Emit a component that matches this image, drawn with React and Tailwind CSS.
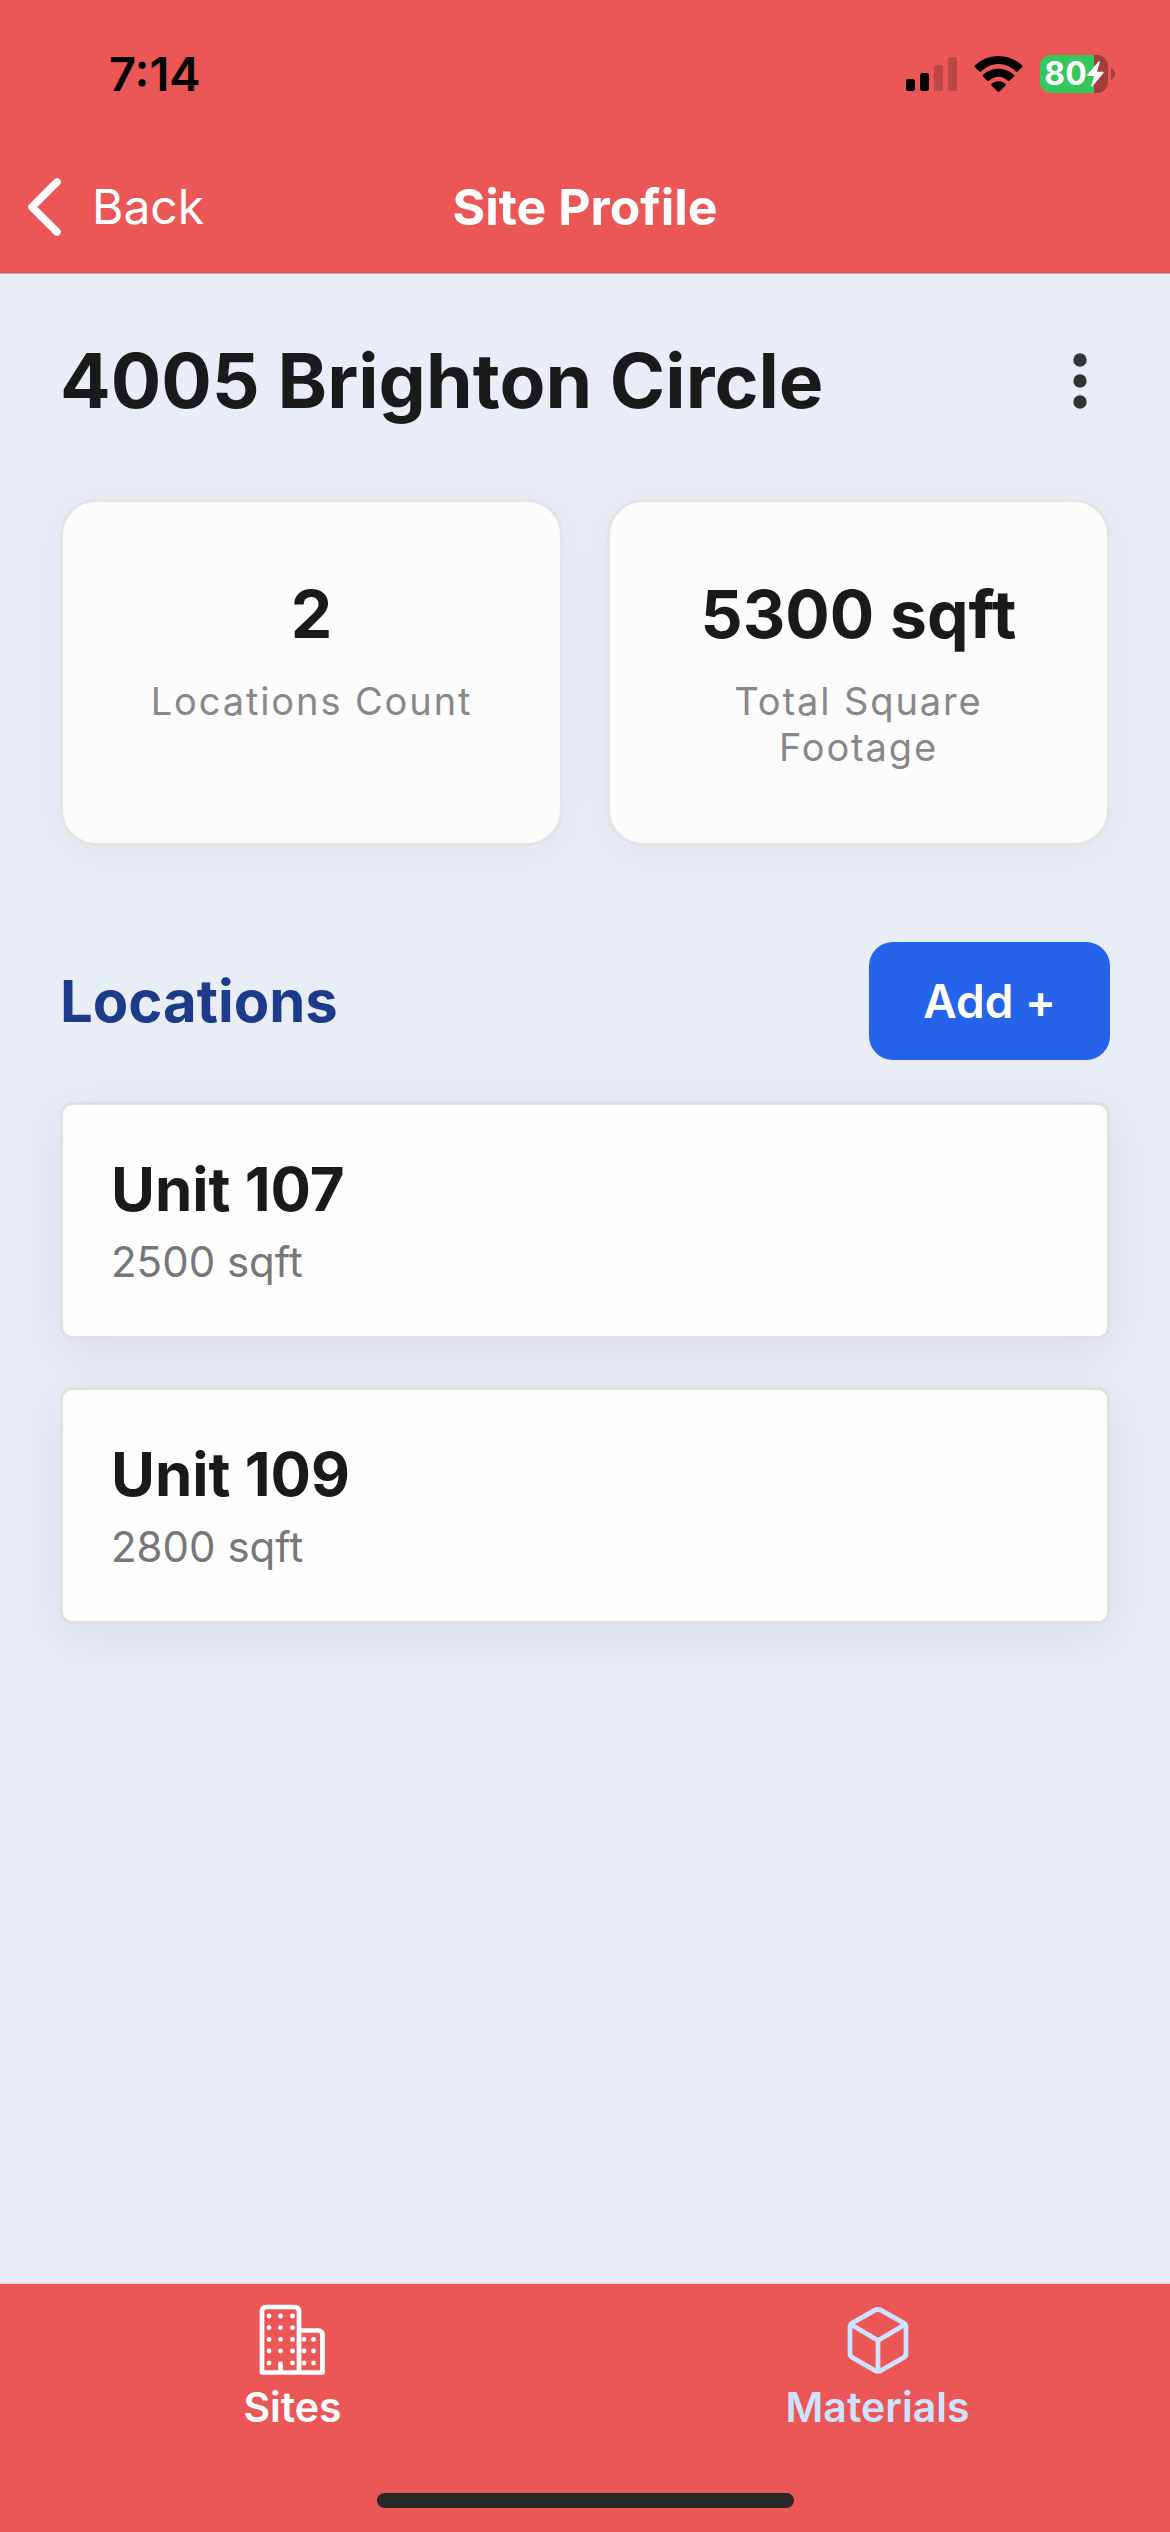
const stats = [
  { value: "2", label: "Locations Count" },
  { value: "5300 sqft", label: "Total Square Footage" },
];

const locations = [
  { name: "Unit 107", size: "2500 sqft" },
  { name: "Unit 109", size: "2800 sqft" },
];

function SignalIcon() {
  return (
    <svg className="h-[36px] w-[51px]" viewBox="0 0 51 36" aria-hidden="true">
      <rect x="0" y="23" width="9" height="12" rx="2.5" />
      <rect x="14" y="17" width="9" height="18" rx="2.5" />
      <rect x="28" y="9" width="9" height="26" rx="2.5" fillOpacity="0.2" />
      <rect x="42" y="1" width="9" height="34" rx="2.5" fillOpacity="0.2" />
    </svg>
  );
}

function WifiIcon() {
  return (
    <svg className="h-[36px] w-[49px]" viewBox="0 0 49 36" aria-hidden="true">
      <path d="M24.5 0C33.7 0 42 3.600 48.200 9.500C48.700 10 48.700 10.600 48.200 11.100L43.700 15.500C43.200 16 42.500 16 42 15.500C37.400 11 31.200 8 24.500 8S11.600 11 7 15.500C6.500 16 5.800 16 5.300 15.500L.8 11.100C.3 10.600 .3 10 .8 9.500C7 3.600 15.300 0 24.500 0Z" />
      <path d="M24.500 12.700C30.500 12.700 36 15 40 18.900C40.500 19.400 40.500 20 40 20.500L35.600 24.700C35.100 25.200 34.500 25.200 34 24.700C31.500 22.400 28.200 20.700 24.500 20.700S17.500 22.400 15 24.700C14.500 25.200 13.900 25.200 13.400 24.700L9 20.500C8.500 20 8.500 19.400 9 18.900C13 15 18.500 12.700 24.500 12.700Z" />
      <path d="M24.500 25.300C27.200 25.300 29.700 26.300 31.500 28C32 28.500 32 29.100 31.500 29.600L25.500 35.400C24.900 36 24.100 36 23.500 35.400L17.500 29.600C17 29.100 17 28.500 17.500 28C19.300 26.300 21.800 25.300 24.500 25.300Z" />
    </svg>
  );
}

function BatteryIcon() {
  return (
    <div className="flex items-center" role="img" aria-label="Battery 80 percent, charging">
      <div className="flex h-[38px] w-[68px] items-center justify-center rounded-[11px] bg-linear-to-r from-[#34c759] from-79% to-[#a43d3d] to-79% text-white">
        <span className="text-[32px] leading-[38px] font-bold">80</span>
        <svg className="h-[26px] w-[17px]" viewBox="0 0 17 26" fill="currentColor" aria-hidden="true">
          <path d="M11.500.6L.5 13.500C0 14.200.300 15 1.200 15H7L4.300 24.800C4.100 25.600 4.900 26 5.500 25.300L16.300 12.300C16.900 11.600 16.500 10.800 15.700 10.800H10L12.900 1.300C13.100.4 12.200-.1 11.500.6Z" />
        </svg>
      </div>
      <svg className="ml-[3px] h-3 w-1" viewBox="0 0 4 12" fill="#a43d3d" aria-hidden="true">
        <path d="M0 0C2.600 1 4 3.400 4 6S2.600 11 0 12Z" />
      </svg>
    </div>
  );
}

function BuildingsIcon() {
  const dots = [];
  for (const x of [10, 21.500, 33.500]) {
    for (const y of [12, 23.700, 35.400, 47, 59]) {
      if (x !== 21.500 || y !== 59) dots.push([x, y]);
    }
  }
  for (const x of [45, 54.500]) {
    for (const y of [35.400, 47, 59]) dots.push([x, y]);
  }
  return (
    <svg className="h-[72px] w-[67px]" viewBox="0 0 67 72" fill="none" aria-hidden="true">
      <path d="M3 68.500V7.500Q3 3 7.500 3H35.500Q40 3 40 7.500V68.500Z" stroke="currentColor" strokeWidth="4.700" strokeLinejoin="round" />
      <path d="M40 26.500H59Q63.500 26.500 63.500 31V68.500H40" stroke="currentColor" strokeWidth="4.700" strokeLinejoin="round" />
      <path d="M21.500 59.500V68" stroke="currentColor" strokeWidth="4.700" strokeLinecap="round" />
      {dots.map(([x, y]) => (
        <circle key={`${x}-${y}`} cx={x} cy={y} r="2.400" fill="currentColor" />
      ))}
    </svg>
  );
}

function CubeIcon() {
  return (
    <svg className="h-[72px] w-[66px]" viewBox="0 0 66 72" fill="none" stroke="currentColor" strokeWidth="4.800" strokeLinejoin="round" strokeLinecap="round" aria-hidden="true">
      <path d="M30 6.200Q33 4.600 36 6.200L58.500 18.800Q61 20.200 61 23.200V49.500Q61 52.300 58.500 53.700L36 66.500Q33 68 30 66.500L7.500 53.700Q5 52.300 5 49.500V23.200Q5 20.200 7.500 18.800Z" />
      <path d="M6 20.500L33 36.500L60 20.500M33 36.500V66" />
    </svg>
  );
}

function StatCard({ value, label }) {
  return (
    <div className="flex min-h-[347px] flex-col items-center rounded-[36px] border-[3px] border-[#e4e4e4] bg-[#fcfcfc] px-12 pt-[72px] text-center shadow-[0_6px_36px_rgba(0,0,0,0.04)]">
      <p className="text-[66px] leading-[80px] font-bold text-[#1a1a1a]">{value}</p>
      <p className="mt-6 text-[38px] leading-[46px] tracking-wider text-[#888888]">{label}</p>
    </div>
  );
}

function LocationCard({ name, size }) {
  return (
    <a href="#" className="block rounded-xl border-[3px] border-[#e0e0e0] bg-[#fefefe] px-12 pt-12 pb-[46px] shadow-[0_12px_48px_rgba(0,0,0,0.07)]">
      <h3 className="text-[60px] leading-[72px] font-bold text-[#1a1a1a]">{name}</h3>
      <p className="mt-2 text-[42px] leading-[57px] text-[#777777]">{size}</p>
    </a>
  );
}

export default function App() {
  return (
    <div className="flex min-h-screen flex-col bg-[#e9eef6] font-['Inter',sans-serif]">
      <header className="border-b border-[#b5a9ac] bg-[#eb5757]">
        <div className="flex h-[142px] items-center justify-between pt-[6px] pr-[55px] pl-[109px]">
          <time className="text-[47px] leading-[56px] font-semibold text-black">7:14</time>
          <div className="flex items-center gap-[17px]">
            <SignalIcon />
            <WifiIcon />
            <BatteryIcon />
          </div>
        </div>
        <div className="grid h-[131px] grid-cols-[1fr_auto_1fr] items-center px-6 pb-[2px] text-white">
          <button type="button" className="flex items-center gap-[30px] text-[48px] leading-[60px]">
            <svg className="h-[62px] w-[38px]" viewBox="0 0 38 62" fill="none" stroke="currentColor" strokeWidth="7.500" strokeLinecap="round" strokeLinejoin="round" aria-hidden="true">
              <path d="M33 6L8 31L33 56" />
            </svg>
            Back
          </button>
          <h1 className="text-[50px] leading-[60px] font-bold">Site Profile</h1>
        </div>
      </header>

      <main className="flex-1 px-[60px] pt-[60px]">
        <div className="flex items-center justify-between">
          <h2 className="text-[75px] leading-[94px] font-bold text-[#1a1a1a]">4005 Brighton Circle</h2>
          <button type="button" aria-label="More options" className="px-[23px]">
            <svg className="h-[56px] w-[14px]" viewBox="0 0 14 56" fill="#333333" aria-hidden="true">
              <circle cx="7" cy="7" r="6.700" />
              <circle cx="7" cy="28" r="6.700" />
              <circle cx="7" cy="49" r="6.700" />
            </svg>
          </button>
        </div>

        <section className="mt-[71px] grid grid-cols-2 gap-11">
          {stats.map((s) => (
            <StatCard key={s.label} {...s} />
          ))}
        </section>

        <section className="mt-24">
          <div className="flex items-center justify-between">
            <h2 className="text-[58px] leading-[72px] font-bold text-[#1e3a8a]">Locations</h2>
            <button type="button" className="rounded-3xl bg-[#2563eb] px-[54px] py-[30px] text-[46px] leading-[58px] font-semibold text-white">Add +</button>
          </div>
          <div className="mt-[42px] flex flex-col gap-12">
            {locations.map((l) => (
              <LocationCard key={l.name} {...l} />
            ))}
          </div>
        </section>
      </main>

      <footer className="border-t border-[#d8d5dc] bg-[#eb5757]">
        <nav className="grid grid-cols-2 pt-5 text-[41px] leading-[50px] font-semibold">
          <a href="#" aria-current="page" className="flex flex-col items-center gap-[6px] text-white">
            <BuildingsIcon />
            Sites
          </a>
          <a href="#" className="flex flex-col items-center gap-[6px] text-[#cce4ff]">
            <CubeIcon />
            Materials
          </a>
        </nav>
        <div className="flex justify-center pt-[61px] pb-6">
          <div className="h-[15px] w-[417px] rounded-full bg-[#282828]" />
        </div>
      </footer>
    </div>
  );
}
